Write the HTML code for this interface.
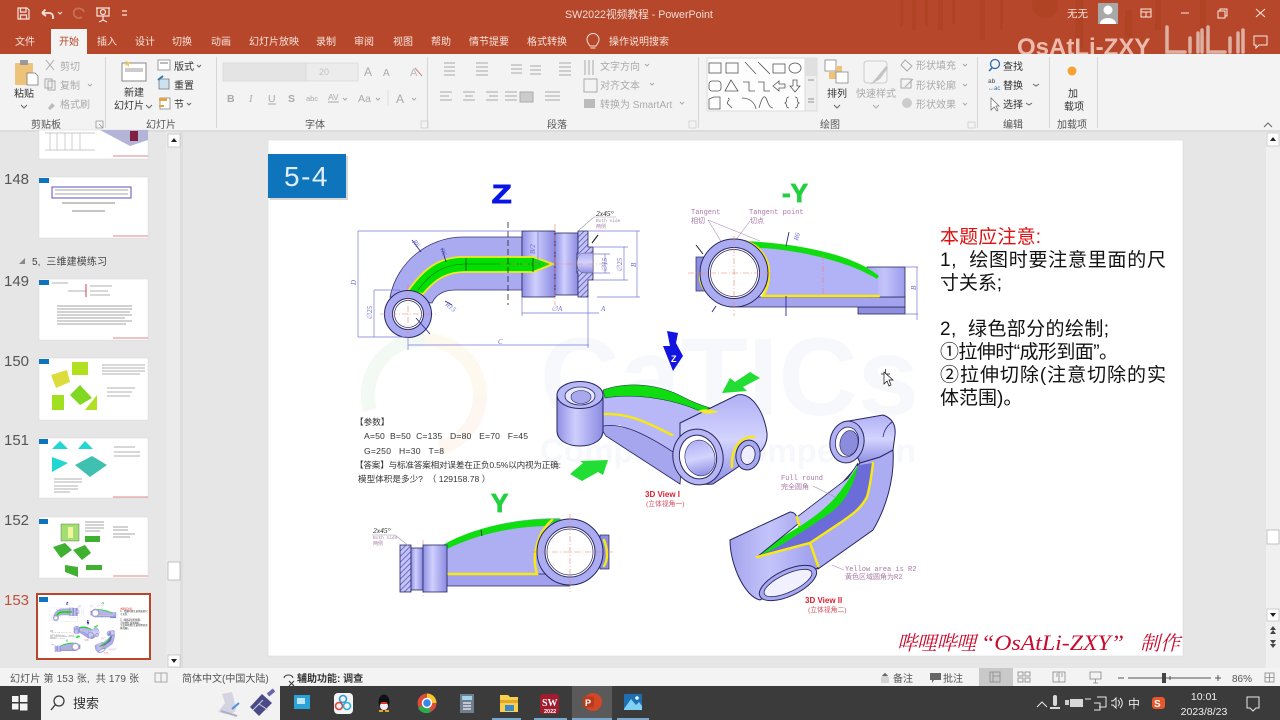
<!DOCTYPE html>
<html lang="zh"><head><meta charset="utf-8"><title>SW2022视频教程 - PowerPoint</title>
<style>
html,body{margin:0;padding:0;background:#e6e6e6;width:1280px;height:720px;overflow:hidden}
svg{display:block;font-family:"Liberation Sans","Noto Sans CJK SC",sans-serif;filter:blur(.3px)}
.w{fill:#fff;font-size:10px}
.t{fill:#f7e3dc;font-size:10px}
.k{fill:#444;font-size:10px}
.g{fill:#aaa;font-size:10px}
.d{fill:#6a6ad0;font-size:7px;font-family:"Liberation Serif","Noto Serif CJK SC",serif;font-style:italic}
.p{fill:#a878a8;font-size:7px;font-family:"Liberation Mono","Noto Sans CJK SC",monospace}
.l{stroke:#7878d8;stroke-width:.7;fill:none}
.i{stroke:#aaa;stroke-width:1;fill:none}
.n{stroke:#666;stroke-width:1;fill:none}
.c{fill:#333;font-size:10px}
.s{fill:#555;font-size:10px}
.r{stroke:#f08070;stroke-width:.6;fill:none;stroke-dasharray:6 2 1 2}
.y{stroke:#f8ea10;fill:none;stroke-width:2.4;stroke-linecap:round}
.tt{fill:#555;font-size:15px}
.b{fill:#333;font-size:8.6px}
.rt{fill:#111;font-size:19px}
</style></head><body>
<svg width="1280" height="720" viewBox="0 0 1280 720" xmlns="http://www.w3.org/2000/svg">
<defs>
<linearGradient id="m" x1="0" x2="1" y1="0" y2="0"><stop offset="0" stop-color="#a4a4ee"/><stop offset=".45" stop-color="#c4c4fb"/><stop offset="1" stop-color="#9c9cec"/></linearGradient>
<linearGradient id="mv" x1="0" x2="0" y1="0" y2="1"><stop offset="0" stop-color="#b0b0f6"/><stop offset=".5" stop-color="#d4d4fe"/><stop offset="1" stop-color="#8e8ee4"/></linearGradient>
<linearGradient id="mh" x1="0" x2="1" y1="0" y2="0"><stop offset="0" stop-color="#8f8fe6"/><stop offset=".4" stop-color="#cfcffd"/><stop offset="1" stop-color="#8a8ae2"/></linearGradient>
<pattern id="h" width="4" height="4" patternUnits="userSpaceOnUse" patternTransform="rotate(45)"><rect width="4" height="4" fill="#c4c4f6"/><rect width="1" height="4" fill="#6c6cc8"/></pattern>

<g id="parts">
<!-- Z view -->
<text x="491" y="203" font-size="26" font-weight="700" fill="#0a14e6" stroke="#0a14e6" stroke-width="1" transform="translate(-122 0) scale(1.25 1)">Z</text>
<path d="M390 297C397 262 428 237 463 237L522 237V290H455C445 290 436 294 432 303Z" fill="#aaaaf0" stroke="#383870" stroke-width=".8"/>
<rect x="522" y="231" width="33" height="66" fill="url(#mh)" stroke="#262660" stroke-width=".8"/>
<rect x="555" y="233" width="23" height="62" fill="url(#mh)" stroke="#262660" stroke-width=".8"/>
<path d="M578 231H588V247H593V280H588V297H578V273H577V253H578Z" fill="url(#h)" stroke="#262660" stroke-width=".8"/>
<path d="M577 263C577 256 580 253 585 253H593V273H585C580 273 577 270 577 263Z" fill="url(#mv)" stroke="#555" stroke-width=".5"/>
<path d="M408 291C424 268 440 257 463 257H533L553 264 533 272H465C448 272 436 278 423 294Z" fill="#00e000" stroke="#f4e820" stroke-width="1.8"/>
<path d="M418 290C432 271 447 264 465 264H540" stroke="#106a10" fill="none" stroke-width=".6"/>
<path d="M466 258V271M533 258V272" stroke="#143" stroke-width=".8"/>
<circle cx="408" cy="314" r="23.5" fill="#aaaaf2" stroke="#262660"/><circle cx="408" cy="314" r="15.5" fill="#fff" stroke="#262660"/><circle cx="408" cy="314" r="13.5" fill="#fff" stroke="#262660" stroke-width=".7"/>
<path class="r" d="M380 314H436M408 284V340M500 264H610M555 224V305"/>
<path d="M508 222V305" stroke="#222" stroke-width=".8" stroke-dasharray="6 3"/>
<path class="l" d="M358 231H522M358 231V337M358 337H408M374 290V337M374 290H400M522 297V316M522 313H599M588 297V348M408 337V350M408 345H589M588 231H640M597 297H640M637 231V297M538 231V264M593 247H628M593 280H628M624 247V280M593 254H610M593 273H610M605 254V273"/>
<path d="M578 231L594 217H616" stroke="#999" stroke-width=".6" fill="none"/>
<path d="M412 240L421 252M442 248L446 262M445 301L452 305M416 318L430 334" stroke="#2a2a90" stroke-width=".9" fill="none"/>
<path d="M592 243L598 235" stroke="#222" stroke-width="1.1" />
<text class="d" x="356" y="285" transform="rotate(-90 356 285)">D</text>
<text class="d" x="372" y="320" transform="rotate(-90 372 320)">∅25</text>
<text class="d" x="498" y="344">C</text><text class="d" x="551" y="311">∅A</text><text class="d" x="601" y="311">A</text>
<text class="d" x="636" y="267" transform="rotate(-90 636 267)">B</text>
<text class="d" x="535" y="254" transform="rotate(-90 535 254)">B/2</text>
<text class="d" x="622" y="272" transform="rotate(-90 622 272)">∅25</text>
<text class="d" x="607" y="272" transform="rotate(-90 607 272)">∅15</text>
<text class="d" x="412" y="242" transform="rotate(50 412 242)">R6</text>
<text class="d" x="440" y="249" transform="rotate(70 440 249)">R6</text>
<text class="d" x="445" y="305" transform="rotate(40 445 305)">R15</text>
<text x="596" y="216" font-size="7.5" font-style="italic" fill="#222" font-family="Liberation Serif">2x45°</text>
<text x="596" y="222" font-size="4.5" fill="#aa88aa" font-family="Liberation Mono">Both side</text>
<text x="596" y="228" font-size="5" fill="#aa88aa">两侧</text>

<!-- -Y view -->
<text x="782" y="202" font-size="26" font-weight="700" fill="#22d040" stroke="#22d040" stroke-width=".8">-Y</text>
<text class="p" x="691" y="214">Tangent</text><text class="p" x="691" y="223">相切</text>
<text class="p" x="749" y="214">Tangent point</text><text class="p" x="750" y="223">切点</text>
<path d="M708 220L722 243M708 220L760 241M750 221L735 241" stroke="#b090b8" stroke-width=".6" fill="none"/>
<rect x="696" y="257" width="12" height="34" fill="#8c8ce0" stroke="#262660" stroke-width=".7"/>
<rect x="858" y="307" width="47" height="7" fill="#8f8fe0" stroke="#262660" stroke-width=".8"/>
<path d="M737 297H905V307H737Z" fill="#a3a3ee" stroke="#262660" stroke-width=".8"/>
<rect x="867" y="267" width="38" height="30" fill="url(#m)" stroke="#262660" stroke-width=".8"/>
<path d="M745 241C790 245 845 255 878 273V297H763L770 270Z" fill="#b2b2f6"/>
<path d="M745 241C790 243 850 252 879 276L877 279C850 262 800 250 760 248Z" fill="#10dd10"/>
<path d="M745 241C762 246 770 262 769 275C769 284 766 291 763 296H879" class="y"/>
<path d="M705 263C698 272 699 283 705 290" class="y" stroke-width="1.5"/>
<circle cx="734" cy="273" r="34" fill="#acacf2" stroke="#262660"/><circle cx="734" cy="273" r="25.5" fill="#fff" stroke="#262660"/><circle cx="734" cy="273" r="23.5" fill="#fff" stroke="#262660" stroke-width=".7"/>
<path class="r" d="M688 273H772M734 236V316M823 255V296"/>
<path class="l" d="M905 267H918M905 314H918M917 267V320"/>
<path d="M786 246L789 232M786 296V316M716 306L712 312" stroke="#2a2a90" stroke-width=".9" fill="none"/>
<text class="d" x="798" y="241" transform="rotate(-75 798 241)">R6</text>
<text class="d" x="916" y="290" transform="rotate(-90 916 290)">B</text>
<path d="M696 245L703 254" stroke="#222" stroke-width="1"/>

<!-- 3D view I -->
<path d="M667 331L678 333 676 343 683 356 673 371 663 346 670 346Z" fill="#1414e0"/>
<text x="671" y="362" font-size="9" font-weight="700" fill="#fff">Z</text>
<path d="M722 393L730 378 735 382 750 372 760 378 743 387 747 391Z" fill="#22dd33"/>
<path d="M570 474L583 463 580 461 608 460 603 475 598 472 582 481Z" fill="#22dd33"/>
<path d="M603 390C628 382 660 384 685 398 705 408 718 412 720 412L700 440 690 465 620 425 598 426Z" fill="#b8b8f8"/>
<path d="M600 427C620 420 650 436 682 458L680 484 606 436Z" fill="#a6a6ee" stroke="#262660" stroke-width=".8"/>
<path d="M603 390C628 381 660 384 685 398 705 408 715 408 719 412L697 410C680 402 640 392 605 398Z" fill="#10dd10" stroke="#124" stroke-width=".5"/>
<path d="M604 414C630 413 650 424 672 435" class="y" stroke-width="2.4"/>
<path d="M557 395V431C557 440 567 446 580 446 593 446 603 440 603 431V395Z" fill="url(#mh)" stroke="#262660"/>
<ellipse cx="580" cy="395" rx="23" ry="13.5" fill="#b8b8f6" stroke="#262660"/><ellipse cx="580" cy="396" rx="15" ry="9" fill="#e8e8ff" stroke="#262660" stroke-width=".8"/><ellipse cx="581" cy="397" rx="10" ry="6.5" fill="#a8a8ee" stroke="#262660" stroke-width=".6"/>
<path d="M680 423L737 395C752 392 764 412 767 433 768 445 760 452 760 452L713 484C700 485 685 484 680 470Z" fill="url(#mv)" stroke="#262660"/>
<path d="M697 411C705 408 712 409 719 412L707 414Z" fill="#f3e830"/>
<ellipse cx="698" cy="457" rx="25" ry="28" transform="rotate(-12 698 457)" fill="#b6b6f4" stroke="#262660"/><ellipse cx="698" cy="457" rx="18.5" ry="22" transform="rotate(-12 698 457)" fill="#fff" stroke="#262660"/><ellipse cx="700" cy="458" rx="15" ry="18" transform="rotate(-12 700 458)" fill="url(#mv)" stroke="#262660" stroke-width=".6"/>
<path d="M732 467C731 452 738 436 754 437" class="y" stroke-width="2.2"/>
<ellipse cx="748" cy="455" rx="12" ry="15" transform="rotate(10 748 455)" fill="#a8a8ee" stroke="#262660"/><ellipse cx="748" cy="455" rx="7" ry="9.5" transform="rotate(10 748 455)" fill="#eef" stroke="#262660" stroke-width=".8"/>
<text x="645" y="497" font-size="8" font-weight="700" fill="#dd2030">3D View I</text>
<text x="646" y="506" font-size="6.8" fill="#d85060">(立体视角一)</text>

<!-- 3D view II -->
<path d="M860 463L880 457 893 450C895 480 885 510 873 530L818 569 800 530Z" fill="#acacf2" stroke="#262660"/>
<path d="M797 517L848 478 858 463 852 495 800 532Z" fill="#bcbcf6" stroke="#262660" stroke-width=".8"/>
<path d="M859 465L873 463C871 480 869 490 867 497 860 510 850 516 840 523L810 543 757 557C780 545 810 525 830 513 845 500 852 485 859 465Z" fill="#6c6cd8"/>
<path d="M755 557C770 545 785 535 797 528 815 517 825 508 833 500 842 490 852 475 858 465 855 480 852 485 848 493 842 503 837 508 830 513 820 520 810 527 800 533 785 543 770 552 755 557Z" fill="#10dd10"/>
<path d="M873 463C871 480 869 490 867 497 860 510 850 516 840 523L810 543 757 557M810 543L818 566" class="y" stroke-width="2.4"/>
<path d="M843 422L883 415C892 418 896 425 895 435L893 450 880 457 860 463Z" fill="url(#mv)" stroke="#262660"/>
<path d="M883 437C884 430 888 425 892 422" stroke="#262660" fill="none" stroke-width=".8"/>
<ellipse cx="847" cy="442" rx="17" ry="21" transform="rotate(10 847 442)" fill="#b0b0f2" stroke="#262660"/><ellipse cx="847" cy="442" rx="11.5" ry="15" transform="rotate(10 847 442)" fill="#fff" stroke="#262660" stroke-width=".8"/><ellipse cx="849" cy="443" rx="9" ry="12.500" transform="rotate(10 849 443)" fill="#8c8cdc" stroke="#262660" stroke-width=".6"/>
<path d="M738 560C734 570 740 585 748 585L752 570Z" fill="#b0b0f0" stroke="#262660"/>
<path d="M730 540L790 512C796 512 798 518 798 524L757 557 810 543 818 568 760 600C745 597 730 565 730 540Z" fill="url(#m)" stroke="#262660"/>
<path d="M797 517L799 525M757 557L810 543 818 566" class="y" stroke-width="2.2"/>
<ellipse cx="788" cy="583" rx="31" ry="13" transform="rotate(-25 788 583)" fill="#a8a8ee" stroke="#262660"/><ellipse cx="788" cy="583" rx="26" ry="9" transform="rotate(-25 788 583)" fill="#f0f0ff" stroke="#262660" stroke-width=".8"/>
<text class="p" x="781" y="480">Full round</text><text class="p" x="781" y="489">完全圆角</text>
<path d="M813 486L835 497M832 565L844 570" stroke="#a888a8" stroke-width=".6" fill="none"/>
<text class="p" x="845" y="571">Yellow area is R2</text><text class="p" x="845" y="579">黄色区域圆角为R2</text>
<text x="805" y="603" font-size="8" font-weight="700" fill="#dd2030">3D View II</text>
<text x="808" y="612" font-size="6.8" fill="#d85060">(立体视角二)</text>

<!-- Y view -->
<text x="491" y="512" font-size="26" font-weight="700" fill="#22d040" stroke="#22d040" stroke-width=".8">Y</text>
<rect x="600" y="535" width="9" height="34" fill="#8c8ce0" stroke="#262660" stroke-width=".7"/>
<path d="M447 545C480 525 520 518 560 518L570 586H447Z" fill="#aeaef2"/>
<path d="M447 574H570V586H447Z" fill="#a0a0ec" stroke="#262660" stroke-width=".7"/>
<path d="M441 546C475 526 520 518 562 519L545 526C510 527 475 535 447 549Z" fill="#10dd10"/>
<path d="M447 574H537C531 555 538 532 552 520" class="y"/>
<path d="M604 540C608 550 608 560 604 566" class="y" stroke-width="1.5"/>
<circle cx="570" cy="552" r="33" fill="#acacf2" stroke="#262660"/><circle cx="570" cy="552" r="25" fill="#fff" stroke="#262660"/><circle cx="570" cy="552" r="23" fill="#fff" stroke="#262660" stroke-width=".7"/>
<path class="r" d="M530 552H615M570 514V592M423 540V596"/>
<rect x="400" y="545" width="11" height="47" fill="url(#h)" stroke="#262660" stroke-width=".8"/>
<rect x="411" y="548" width="12" height="42" fill="url(#mh)" stroke="#262660" stroke-width=".8"/>
<rect x="423" y="545" width="24" height="47" fill="url(#mh)" stroke="#262660" stroke-width=".8"/>
<path d="M481 530L482 536" stroke="#222" stroke-width=".8"/>
<path d="M372 535H395L410 547" stroke="#999" stroke-width=".6" fill="none"/>
<text x="373" y="533" font-size="7.5" font-style="italic" fill="#222" font-family="Liberation Serif">2x45°</text>
<text x="373" y="539" font-size="4.5" fill="#aa88aa" font-family="Liberation Mono">Both side</text>
<text x="373" y="545" font-size="5" fill="#aa88aa">两侧</text>

<!-- Parameters -->
<text class="b" x="355" y="425">【参数】</text>
<text class="b" x="364" y="439" xml:space="preserve" textLength="164" lengthAdjust="spacing">A=50  B=50  C=135   D=80   E=70   F=45</text>
<text class="b" x="364" y="454" xml:space="preserve" textLength="80" lengthAdjust="spacing">G=250   H=30   T=8</text>
<text class="b" x="355" y="468" textLength="206" lengthAdjust="spacing">【答案】与标准答案相对误差在正负0.5%以内视为正确:</text>
<text class="b" x="358" y="482" xml:space="preserve" font-size="8.6">模型体积是多少?  （ 129158.78 ）</text>

<!-- Notes -->
<text class="rt" x="940" y="243" style="fill:#e01010" textLength="101">本题应注意:</text>
<text class="rt" x="940" y="266" xml:space="preserve" textLength="226">1,  绘图时要注意里面的尺</text>
<text class="rt" x="940" y="289" textLength="62">寸关系;</text>
<text class="rt" x="940" y="335" xml:space="preserve" textLength="169">2,  绿色部分的绘制;</text>
<text class="rt" x="940" y="358" textLength="178">①拉伸时“成形到面”。</text>
<text class="rt" x="940" y="381" textLength="226">②拉伸切除(注意切除的实</text>
<text class="rt" x="940" y="404">体范围)。</text>
</g>
</defs>

<rect width="1280" height="720" fill="#e6e6e6"/>

<!-- title bar -->
<rect width="1280" height="54" fill="#b7472a"/>
<g fill="#a8401f" opacity=".5"><rect x="900" y="0" width="3" height="26"/><rect x="912" y="0" width="4" height="30"/><rect x="925" y="0" width="3" height="26"/><rect x="938" y="0" width="5" height="30"/><rect x="952" y="0" width="3" height="24"/><rect x="980" y="0" width="5" height="40"/><rect x="1000" y="0" width="3" height="30"/><circle cx="1045" cy="5" r="13"/><rect x="1075" y="0" width="8" height="48"/><rect x="1125" y="10" width="7" height="28"/><rect x="1155" y="0" width="6" height="30"/><rect x="1200" y="0" width="6" height="36"/></g>
<text x="1017" y="55" font-size="24" font-weight="700" fill="#f2c8bc" opacity=".9">OsAtLi-ZXY</text>
<!-- QAT -->
<g fill="none" stroke="#f5e4de" stroke-width="1.2"><path d="M18 8H27L29 10V19H18ZM20.5 8V12H26V8M20.5 19V15H26.500V19"/><path d="M42 13L45.500 9.500M42 13L46 16M42 13H49C52 13 53 15 53 17V19" stroke-width="1.8"/><path d="M58 12L60 14 62 12" stroke-width="1"/><path d="M84 12C83 8 76 7 74 11 72 16 78 20 82 17" stroke="#c77058" stroke-width="1.800"/><path d="M96 8H110M97 8V16H109V8M103 16V20M99 22L103 20 107 22"/><circle cx="103" cy="12" r="2.500"/><path d="M122 11H127M122 15H127" stroke-width="1.200"/></g>
<text x="565" y="18" font-size="10.700" fill="#f3ddd6">SW2022视频教程  -  PowerPoint</text>
<text x="1067" y="17" font-size="10.500" fill="#f3ddd6">无无</text>
<rect x="1098" y="3" width="20" height="21" fill="#a8a8a8"/><circle cx="1108" cy="10" r="4.500" fill="#fff"/><path d="M1100 24C1100 16 1116 16 1116 24Z" fill="#fff"/>
<g fill="none" stroke="#f8e8e2" stroke-width="1"><rect x="1141" y="9" width="10" height="8"/><path d="M1141 12H1151M1146 12V17"/><path d="M1181 13H1189"/><rect x="1218" y="11" width="7" height="7"/><path d="M1220 11V9H1227V16H1225"/><path d="M1256 9L1265 17M1265 9L1256 17"/></g>
<g fill="none" stroke="#f8e8e2" stroke-width="1"><path d="M1254 36H1267V45H1259L1256 48V45H1254Z"/></g>
<!-- tabs -->
<rect x="51" y="29" width="36" height="26" fill="#f3f3f3"/>
<text class="t" x="15" y="45">文件</text><text x="59" y="45" font-size="10" fill="#b7472a">开始</text><text class="t" x="97" y="45">插入</text><text class="t" x="135" y="45">设计</text><text class="t" x="172" y="45">切换</text><text class="t" x="211" y="45">动画</text><text class="t" x="249" y="45">幻灯片放映</text><text class="t" x="316" y="45">录制</text><text class="t" x="354" y="45">审阅</text><text class="t" x="393" y="45">视图</text><text class="t" x="431" y="45">帮助</text><text class="t" x="469" y="45">情节提要</text><text class="t" x="527" y="45">格式转换</text><text class="t" x="609" y="45">操作说明搜索</text>
<path d="M590 46C588 43 587 42 587 39.500A6 6 0 0 1 599 39.500C599 42 598 43 596 46ZM590.500 48H595.500" fill="none" stroke="#f7e3dc"/>

<!-- ribbon -->
<rect y="54" width="1280" height="76" fill="#f3f3f3"/>
<rect y="130" width="1280" height="2" fill="#dcdcdc"/>
<g stroke="#eeddd6" stroke-width="3.500" fill="none" opacity=".7" stroke-linecap="round"><path d="M1167 27V52H1185M1190 38V52M1198 33V52M1202 30V52M1208 27V52H1225M1230 38V52M1238 33V52M1243 30V52"/></g>
<g stroke="#d6d6d6"><path d="M105.500 57V128M216.500 57V128M427.500 57V128M698.500 57V128M977.500 57V128M1049.500 57V128M1097.500 57V128"/></g>
<!-- clipboard -->
<rect x="15" y="63" width="18" height="22" rx="1" fill="#edc37a"/><rect x="20" y="60" width="8" height="5" fill="#999"/><path d="M27 73H35L38 76V85H27Z" fill="#fff" stroke="#777" stroke-width=".8"/>
<text class="c" x="14" y="97">粘贴</text><path d="M21 105L24 108 27 105" class="n"/>
<text class="g" x="60" y="70">剪切</text><text class="g" x="60" y="89">复制</text><text class="g" x="60" y="108">格式刷</text>
<path d="M46 60L54 70M54 60L46 70" class="i"/><rect x="45" y="79" width="7" height="9" class="i"/><rect x="48" y="81" width="7" height="9" class="i"/><path d="M48 108L52 103 55 106 50 110Z" fill="#bbb"/><path d="M88 84L90 86 92 84" class="i"/>
<text class="s" x="31" y="128">剪贴板</text><path d="M96 121H103V128H96ZM99 124L103 128" fill="none" stroke="#999" stroke-width=".8"/>
<!-- new slide -->
<rect x="122" y="63" width="24" height="18" fill="#fff" stroke="#888"/><rect x="125" y="68" width="18" height="4" fill="#ccc"/><path d="M125 60L127 63 124 66 127 65 129 67 129 64 131 62 128 62Z" fill="#f4c656"/>
<text class="c" x="124" y="96">新建</text><text class="c" x="114" y="109">幻灯片</text><path d="M146 105L149 108 152 105" class="n"/>
<rect x="158" y="60" width="12" height="10" fill="#fff" stroke="#888" stroke-width=".8"/><path d="M160 63H168" stroke="#bbb" stroke-width="2"/>
<path d="M159 86V79H169V89H159Z" fill="#cde2f0" stroke="#777" stroke-width=".8"/><path d="M158 80L163 76" stroke="#2a7ab0" stroke-width="2"/>
<rect x="160" y="98" width="10" height="11" fill="#fff" stroke="#888" stroke-width=".8"/><rect x="159" y="98" width="8" height="3" fill="#e8a23c"/><rect x="159" y="105" width="5" height="2" fill="#e8a23c"/>
<text class="c" x="174" y="70">版式</text><path d="M197 65L199 67 201 65" class="n"/><text class="c" x="174" y="89">重置</text><text class="c" x="174" y="108">节</text><path d="M187 103L189 105 191 103" class="n"/>
<text class="s" x="146" y="128">幻灯片</text>
<!-- font -->
<rect x="223" y="63" width="83" height="18" fill="#e4e4e4" stroke="#ddd"/><rect x="306" y="63" width="52" height="18" fill="#ececec" stroke="#ddd"/>
<text x="319" y="75" font-size="9" fill="#c4c4c4">20</text>
<text x="364" y="76" font-size="12" fill="#aaa">A</text><text x="383" y="76" font-size="10" fill="#aaa">A</text><text x="410" y="76" font-size="11" fill="#bbb">A</text><path d="M415 68L422 76" stroke="#d08878"/>
<g fill="#aaa" font-size="10.500"><text x="227" y="102" font-weight="700">B</text><text x="249" y="102" font-style="italic" font-family="Liberation Serif">I</text><text x="268" y="102">U</text><text x="288" y="102" font-weight="700">S</text><text x="306" y="101" font-size="7.500">abc</text><text x="328" y="100" font-size="8.500">AV</text><text x="358" y="102">Aa</text><text x="396" y="103" font-size="12">A</text></g>
<path d="M268 104H276M328 102H339" stroke="#aaa"/><path d="M343 98L345 100 347 98M376 98L378 100 380 98M412 98L414 100 416 98" class="i"/><path d="M388 90V106" stroke="#ddd"/>
<text class="s" x="305" y="128">字体</text><path d="M421 121H428V128H421Z" fill="none" stroke="#ccc" stroke-width=".8"/>
<!-- para -->
<g class="i" stroke="#b5b5b5"><path d="M444 63H455M444 67H455M444 71H455M444 75H455M476 63H488M476 67H488M476 71H488M476 75H488M511 65H522M511 69H522M511 73H522M530 66H541M530 70H541M530 74H541M559 63H571M559 67H571M559 71H571M559 75H571M440 92H452M440 96H449M440 100H452M463 92H475M465 96H473M463 100H475M486 92H498M489 96H498M486 100H498M505 92H517M505 96H517M505 100H517M545 92H560M545 96H560M545 100H560"/><rect x="520" y="92" width="13" height="10" fill="#ccc"/></g>
<text class="g" x="600" y="70">文字方向</text><path d="M585 60V75M589 60V75M593 60V75" class="i"/>
<rect x="584" y="79" width="13" height="13" class="i"/><text class="g" x="600" y="89">对齐文本</text>
<rect x="584" y="99" width="11" height="9" fill="#bbb"/><text class="g" x="600" y="108" font-size="10">转换为 SmartArt</text>
<path d="M645 64L647 66 649 64M650 83L652 85 654 83M680 102L682 104 684 102" class="i"/>
<text class="s" x="547" y="128">段落</text><path d="M689 121H696V128H689Z" fill="none" stroke="#ccc" stroke-width=".8"/>
<!-- shapes -->
<rect x="707" y="58" width="110" height="53" fill="#fdfdfd" stroke="#dcdcdc"/><rect x="805" y="58" width="12" height="53" fill="#eee" stroke="#dcdcdc"/><rect x="805" y="58" width="12" height="18" fill="#e0e0e0"/>
<g fill="none" stroke="#555" stroke-width=".8"><rect x="709" y="63" width="12" height="10"/><rect x="726" y="63" width="12" height="10"/><path d="M745 62L756 74M758 62L770 74"/><rect x="773" y="64" width="12" height="9"/><ellipse cx="795" cy="68" rx="6" ry="5"/><rect x="709" y="81" width="12" height="10" rx="3"/><path d="M731 80L725 91H738ZM743 82H749V91H755M758 82H764V91H770M773 86L779 81V84H785V88H779V91ZM793 80H797V86H800L795 92 790 86H793ZM709 109V99L714 97H720V109ZM728 98C732 100 724 102 729 105L732 108M742 98C750 98 755 103 756 109M759 108C763 94 765 94 768 103 770 108 772 108 773 108M789 97C785 97 788 102 785 103 788 104 785 108 789 108M795 97C799 97 796 102 799 103 796 104 799 108 795 108"/><path d="M808 80H814M808 99H814M808 102H814" stroke="#777"/></g>
<rect x="825" y="60" width="11" height="11" fill="#fff" stroke="#888" stroke-width=".8"/><rect x="836" y="66" width="6" height="6" fill="#edc37a"/><rect x="829" y="72" width="7" height="7" fill="#edc37a"/><rect x="836" y="72" width="12" height="11" fill="#fff" stroke="#888" stroke-width=".8"/>
<text class="c" x="827" y="97">排列</text><path d="M834 105L837 108 840 105" class="n"/><text class="s" x="820" y="128">绘图</text>
<rect x="864" y="61" width="23" height="22" rx="3" fill="#f4f4f4" stroke="#ccc"/><path d="M870 85L877 77 886 66 888 68 880 79Z" fill="#c4c4c4"/>
<text class="g" x="856" y="97">快速样式</text><path d="M873 105L876 108 879 105" class="i"/>
<text class="g" x="916" y="69">形状填充</text><text class="g" x="916" y="89">形状轮廓</text><text class="g" x="916" y="108">形状效果</text>
<path d="M905 60L912 66 907 71 901 65Z" class="i"/><rect x="901" y="79" width="10" height="9" class="i"/><path d="M905 87L913 79" class="i"/><circle cx="907" cy="103" r="5" fill="#ccc"/><path d="M963 64L965 66 967 64M963 84L965 86 967 84M963 103L965 105 967 103" class="i"/>
<path d="M968 122H975V128H968Z" fill="none" stroke="#ccc" stroke-width=".8"/>
<!-- editing -->
<circle cx="995" cy="64" r="4.500" fill="none" stroke="#2a6cb0" stroke-width="1.300"/><path d="M992 68L989 71" stroke="#2a6cb0" stroke-width="1.500"/>
<text class="c" x="1003" y="70">查找</text><text class="c" x="1003" y="89">替换</text><text class="c" x="1003" y="108">选择</text><text class="s" x="1003" y="128">编辑</text>
<text x="988" y="83" font-size="6.500" fill="#445">ab</text><text x="988" y="90" font-size="6" fill="#2a6cb0">↔ac</text>
<path d="M991 98V110L994 107 997 111 998 110 996 106H999Z" fill="#fff" stroke="#777" stroke-width=".8"/>
<path d="M1033 84L1036 86 1039 84M1026 103L1029 105 1032 103" class="n"/>
<!-- addins -->
<circle cx="1072" cy="71" r="4.500" fill="#f7a130"/><text class="c" x="1068" y="97">加</text><text class="c" x="1064" y="110">载项</text><text class="s" x="1057" y="128">加载项</text>
<path d="M1264 127L1268 123 1272 127" class="n"/>

<!-- editor area -->
<rect x="268" y="140" width="915" height="516" fill="#fff" stroke="#d4d4d4" stroke-width=".5"/>
<text x="540" y="415" font-size="110" font-weight="700" fill="#f6f8fc">CaTICs</text>
<text x="540" y="462" font-size="33" fill="#f7f8fb" font-weight="700">Computing Competition</text>
<path d="M370 410A55 55 0 0 1 425 340" fill="none" stroke="#f3f9f3" stroke-width="14"/>
<path d="M425 340A55 55 0 0 1 480 395" fill="none" stroke="#fdf9ee" stroke-width="14"/>
<path d="M480 395A55 55 0 0 1 440 448" fill="none" stroke="#fef6f0" stroke-width="14"/>
<!-- badge -->
<rect x="270" y="156" width="78" height="44" fill="#bbb" opacity=".6"/>
<rect x="268" y="154" width="78" height="44" fill="#0e74bc"/>
<text x="284" y="186" font-size="28" fill="#e0eef8" letter-spacing="1.500">5-4</text>
<use href="#parts"/>
<g font-style="italic" fill="#c80c30" font-family="Liberation Serif,Noto Serif CJK SC,serif"><text x="897" y="650" font-size="20" textLength="79">哔哩哔哩</text><text x="981" y="650" font-size="22" textLength="143" lengthAdjust="spacingAndGlyphs">“OsAtLi-ZXY”</text><text x="1140" y="650" font-size="20" textLength="40">制作</text></g>
<!-- cursor -->
<g fill="#fff" stroke="#111" stroke-width=".7"><path d="M881 374H890M885.500 369V379"/><path d="M884 372V384L887 381 889 386 891 385 889 380H893Z"/></g>

<!-- thumbnails panel -->
<rect x="0" y="132" width="166" height="536" fill="#e6e6e6"/>
<rect x="166" y="132" width="17" height="536" fill="#ebebeb"/>
<rect x="180" y="132" width="3" height="536" fill="#dedede"/>
<rect x="168" y="134" width="12" height="13" fill="#fff" stroke="#bbb" stroke-width=".7"/><path d="M171 142H177L174 138Z" fill="#222"/>
<rect x="168" y="655" width="12" height="12" fill="#fff" stroke="#bbb" stroke-width=".7"/><path d="M171 659H177L174 663Z" fill="#222"/>
<rect x="168" y="562" width="12" height="18" fill="#fff" stroke="#aaa" stroke-width=".7"/>

<rect x="39" y="130" width="109" height="29" fill="#fff" stroke="#d8d8d8" stroke-width=".5"/>
<path d="M45 133H95M50 133V150M57 133V150M65 133V150M72 133V150M80 133V150M45 150H95" stroke="#bbb" stroke-width=".7"/><path d="M100 130L130 146 148 140V130Z" fill="#b4b4d8"/><rect x="130" y="131" width="8" height="10" fill="#802040"/><path d="M113 156H148" stroke="#d88" stroke-width="1"/>

<text class="tt" x="4" y="184">148</text>
<rect x="39" y="177" width="109" height="61" fill="#fff" stroke="#d8d8d8" stroke-width=".5"/><rect x="39" y="178" width="10" height="5" fill="#0e74bc"/><rect x="52" y="187" width="79" height="11" fill="none" stroke="#5f50c0"/><path d="M55 190H128M55 194H128" stroke="#888" stroke-width=".8"/><path d="M62 203H115M72 211H105" stroke="#666" stroke-width=".8"/><path d="M113 236H148" stroke="#d88" stroke-width="1"/>

<path d="M25 258V264H19Z" fill="#888"/>
<text x="32" y="265" font-size="10" fill="#444" xml:space="preserve" textLength="75">5,  三维建模练习</text>

<text class="tt" x="4" y="286">149</text>
<rect x="39" y="279" width="109" height="61" fill="#fff" stroke="#d8d8d8" stroke-width=".5"/><rect x="39" y="280" width="10" height="5" fill="#0e74bc"/><path d="M52 283H68M68 291H86M90 286H112M90 291H108M90 295H110" stroke="#999" stroke-width=".8"/><path d="M86 284V297" stroke="#d04050"/><path d="M57 306H132M57 309H132M57 312H130M57 315H132M57 318H125M57 321H132M57 324H126" stroke="#888" stroke-width=".8"/><path d="M113 338H148" stroke="#d88" stroke-width="1"/>

<text class="tt" x="4" y="366">150</text>
<rect x="39" y="358" width="109" height="62" fill="#fff" stroke="#d8d8d8" stroke-width=".5"/><rect x="39" y="359" width="10" height="5" fill="#0e74bc"/><path d="M51 375L67 370 70 382 56 388Z" fill="#dcdc3c"/><path d="M72 362H88V375H72Z" fill="#b0e020"/><path d="M70 395L80 385 92 398 80 405Z" fill="#80d820"/><path d="M52 395H64V410H52Z" fill="#a0e020"/><path d="M85 410L97 395V410Z" fill="#b0e020"/><path d="M102 365H145M102 368H145M102 371H145M102 374H140M107 388H135M107 392H132M107 396H130" stroke="#999" stroke-width=".8"/>

<text class="tt" x="4" y="445">151</text>
<rect x="39" y="438" width="109" height="60" fill="#fff" stroke="#d8d8d8" stroke-width=".5"/><rect x="39" y="439" width="9" height="5" fill="#0e74bc"/><path d="M52 449L60 441 68 449ZM78 449L85 441 93 449ZM52 457L68 463 52 472Z" fill="#20d8d0"/><path d="M75 465L92 456 107 465 90 477Z" fill="#40c0b0"/><path d="M54 479H82M54 482H82M54 486H78M54 489H78M54 492H70M114 447H135M114 452H140M114 456H140" stroke="#999" stroke-width=".8"/><path d="M113 497H148" stroke="#d88" stroke-width="1"/>

<text class="tt" x="4" y="525">152</text>
<rect x="39" y="517" width="109" height="61" fill="#fff" stroke="#d8d8d8" stroke-width=".5"/><rect x="39" y="519" width="9" height="5" fill="#0e74bc"/><rect x="61" y="524" width="18" height="17" fill="#a0e070" stroke="#555" stroke-width=".4"/><rect x="68" y="527" width="5" height="11" fill="#f4f4a0"/><path d="M53 547L65 543 72 550 61 558ZM73 550L85 545 91 553 82 560ZM65 565L78 567V577L65 572ZM85 536H100V542H85ZM86 565H102V570H86Z" fill="#40b030"/><path d="M85 522H104M85 525H104M85 528H104M85 531H100M113 527H128M113 530H128M113 534H135M113 537H130" stroke="#888" stroke-width=".8"/><path d="M113 576H148" stroke="#d88" stroke-width="1"/>

<text x="4" y="605" font-size="15" fill="#c0503a">153</text>
<rect x="37" y="594" width="113" height="65" fill="#fff" stroke="#b7472a" stroke-width="2"/>
<rect x="39" y="597" width="9" height="5" fill="#0e74bc"/>
<g transform="translate(6.500 580) scale(.121)"><use href="#parts"/></g>

<!-- right scrollbar -->
<rect x="1266" y="132" width="14" height="536" fill="#f0f0f0"/>
<rect x="1267" y="133" width="12" height="13" fill="#fff" stroke="#bbb" stroke-width=".7"/><path d="M1270 141H1276L1273 137Z" fill="#222"/>
<rect x="1267" y="530" width="12" height="14" fill="#fff" stroke="#aaa" stroke-width=".7"/>
<rect x="1267" y="609" width="12" height="12" fill="#fff" stroke="#bbb" stroke-width=".7"/><path d="M1270 613H1276L1273 617Z" fill="#222"/>
<path d="M1270 630H1276L1273 626ZM1270 634H1276L1273 630ZM1270 640H1276L1273 644ZM1270 644H1276L1273 648Z" fill="#444"/>

<!-- status bar -->
<rect y="668" width="1280" height="18" fill="#f3f3f3"/>
<text x="10" y="682" font-size="10" fill="#555" xml:space="preserve" textLength="129">幻灯片 第 153 张,  共 179 张</text>
<rect x="155" y="673" width="6" height="9" class="i"/><rect x="161" y="673" width="6" height="9" class="i"/>
<text x="182" y="682" font-size="10" fill="#555">简体中文(中国大陆)</text>
<path d="M284 678C285 674 292 674 293 678M289 681L294 686M294 681L289 686" fill="none" stroke="#333"/>
<text x="297" y="682" font-size="10" font-weight="700" fill="#333">辅助功能: 调查</text>
<path d="M881 678H889M881 680H889M881 682H889M885 673L888 676H882Z" fill="#666" stroke="#777" stroke-width=".5"/>
<text x="893" y="682" font-size="10" fill="#555">备注</text>
<path d="M930 673H941V680H934L932 683V680H930Z" fill="#666"/>
<text x="943" y="682" font-size="10" fill="#555">批注</text>
<rect x="979" y="668" width="34" height="18" fill="#c9c9c9"/>
<g fill="none" stroke="#888" stroke-width=".8"><rect x="990" y="672" width="10" height="10"/><path d="M993 672V682M993 676H1000"/><rect x="1018" y="672" width="5" height="4"/><rect x="1025" y="672" width="5" height="4"/><rect x="1018" y="678" width="5" height="4"/><rect x="1025" y="678" width="5" height="4"/><rect x="1053" y="672" width="12" height="10"/><path d="M1059 672V682M1056 674H1058M1061 674H1063M1056 676H1058M1061 676H1063"/><rect x="1090" y="672" width="11" height="7"/><path d="M1095.500 679V683M1093 683H1098"/></g>
<path d="M1118 678H1124M1128 678H1211" stroke="#555"/><rect x="1162" y="673" width="4" height="10" fill="#444"/><path d="M1170 676V680" stroke="#555"/><path d="M1215 678H1221M1218 675V681" stroke="#555"/>
<text x="1232" y="682" font-size="10" fill="#555">86%</text>
<g fill="none" stroke="#888" stroke-width=".8"><rect x="1265" y="673" width="9" height="9"/><path d="M1269.500 673V682M1265 677.500H1274"/></g>

<!-- taskbar -->
<rect y="686" width="1280" height="34" fill="#3b3b3b"/>
<g fill="#f4f4f4"><rect x="12" y="696" width="6.500" height="6"/><rect x="20" y="695" width="7.500" height="7"/><rect x="12" y="703.500" width="6.500" height="6"/><rect x="20" y="703.500" width="7.500" height="7"/></g>
<rect x="41" y="686" width="239" height="34" fill="#f2f2f2"/>
<circle cx="59" cy="701" r="5" fill="none" stroke="#333" stroke-width="1.200"/><path d="M55.500 704.500L51 710" stroke="#333" stroke-width="1.300"/>
<text x="73" y="708" font-size="13" fill="#333">搜索</text>
<path d="M222 694L232 692 236 708C237 712 230 716 222 713L218 712 225 703Z" fill="#d4d4e0"/><path d="M221 711L237 716" stroke="#b0b0c4" stroke-width="2"/><path d="M232 709L239 703" stroke="#4a90e0" stroke-width="2"/>
<path d="M250 707L262 694 272 703 259 716Z" fill="#4a4a86"/><path d="M253 710L263 700M259 704L268 710" stroke="#d0d0e8"/><path d="M268 695L274 690" stroke="#6868a8" stroke-width="4"/>
<!-- app icons -->
<rect x="294" y="695" width="16" height="14" fill="#2aa4d8"/><rect x="297" y="698" width="8" height="6" fill="#bfe6f6"/>
<rect x="334" y="693" width="19" height="21" rx="4" fill="#f4f4f4"/><circle cx="343" cy="699" r="3.500" fill="none" stroke="#2a9ae0" stroke-width="1.600"/><circle cx="339" cy="706" r="3.500" fill="none" stroke="#e04040" stroke-width="1.600"/><circle cx="347" cy="706" r="3.500" fill="none" stroke="#2ab0e0" stroke-width="1.600"/>
<ellipse cx="384" cy="702" rx="5.500" ry="7.500" fill="#111"/><ellipse cx="384" cy="706" rx="4" ry="4" fill="#eee"/><rect x="381" y="702" width="6" height="2" fill="#e23020"/><path d="M379 711H383M385 711H389" stroke="#f0a020" stroke-width="2"/>
<circle cx="427" cy="703" r="9.500" fill="#dd4b39"/><path d="M427 703L418 708A9.500 9.500 0 0 0 431 712Z" fill="#2fa84f"/><path d="M427 693.500A9.500 9.500 0 0 1 436.500 703L427 703Z" fill="#f6c52c"/><circle cx="427" cy="703" r="4.500" fill="#3a86e8" stroke="#fff" stroke-width="1.500"/>
<rect x="460" y="694" width="14" height="19" fill="#6f7f8c"/><rect x="462" y="696" width="10" height="4" fill="#9fd4ef"/><path d="M463 703H471M463 706H471M463 709H471" stroke="#dde" stroke-width="1.500"/>
<path d="M500 695H508L510 697H518V712H500Z" fill="#f7d04d"/><rect x="500" y="700" width="18" height="3" fill="#e8a628"/><rect x="505" y="705" width="9" height="6" fill="#3a88d0"/>
<rect x="540" y="694" width="19" height="20" rx="3" fill="#9f1d2e"/><text x="542" y="706" font-size="10" font-weight="700" fill="#fff" font-family="Liberation Serif">SW</text><text x="544" y="713" font-size="5.500" fill="#fff" font-weight="700">2022</text>
<rect x="572" y="686" width="40" height="34" fill="#5a5a5a"/>
<circle cx="593" cy="702" r="9" fill="#d24726"/><rect x="583" y="696.500" width="11" height="11" rx="1" fill="#b83c1c"/><text x="585" y="706" font-size="9" font-weight="700" fill="#fff">P</text>
<rect x="624" y="694" width="18" height="16" rx="1" fill="#1f6fb2"/><path d="M624 709L631 699 636 705 639 702 642 706V710H624Z" fill="#7fd0f4"/><circle cx="637" cy="698" r="1.800" fill="#dff"/>
<g fill="#7aa8cc"><rect x="492" y="718" width="29" height="2"/><rect x="534" y="718" width="33" height="2"/><rect x="572" y="718" width="40" height="2"/><rect x="617" y="718" width="32" height="2"/></g>
<!-- tray -->
<g fill="none" stroke="#e8e8e8" stroke-width="1"><path d="M1037 707L1042 702 1047 707"/><path d="M1085 699H1091M1097 697H1106V707H1099M1094 703H1100V710H1094M1111 701H1113L1116 698V708L1113 705H1111M1118 700C1120 702 1120 704 1118 706M1120 698C1123 701 1123 705 1120 708"/><path d="M1247 697H1259V708H1256L1253 711 1250 708H1247Z"/></g>
<rect x="1053" y="695" width="4" height="11" rx="2" fill="#d8d8d8"/><path d="M1050 708H1060" stroke="#d8d8d8" stroke-width="2"/>
<rect x="1070" y="699" width="13" height="8" fill="#d8d8d8"/><rect x="1065" y="700" width="4" height="5" fill="#ccc"/>
<text x="1128" y="708" font-size="12" fill="#e8e8e8">中</text>
<rect x="1152" y="697" width="13" height="12" rx="3" fill="#e8562a"/><text x="1154" y="707" font-size="10" font-weight="700" fill="#fff">S</text>
<text x="1204" y="700" font-size="10.500" fill="#f0f0f0" text-anchor="middle">10:01</text>
<text x="1204" y="715" font-size="10.500" fill="#f0f0f0" text-anchor="middle">2023/8/23</text>
</svg>
</body></html>
